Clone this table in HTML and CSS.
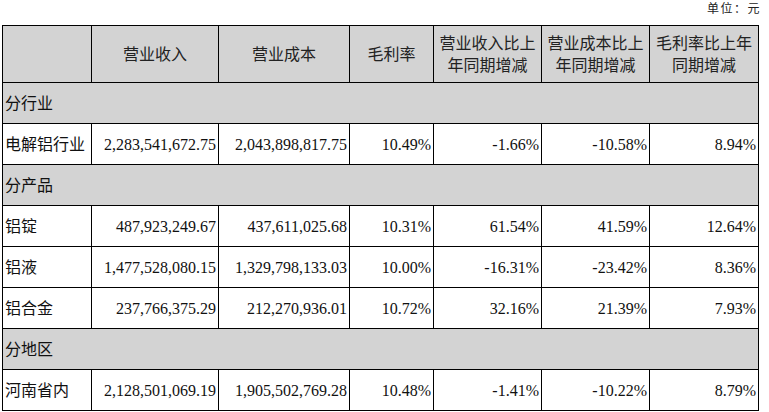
FILE: index.html
```html
<!DOCTYPE html>
<html lang="zh">
<head>
<meta charset="utf-8">
<title>营业收入</title>
<link rel="stylesheet" href="styles.css">
</head>
<body>
<div class="page">
  <div class="unit">单位：元</div>
  <table class="report">
    <colgroup>
      <col class="c1"><col class="c2"><col class="c3"><col class="c4"><col class="c5"><col class="c6"><col class="c7">
    </colgroup>
    <tr class="head">
      <th></th>
      <th>营业收入</th>
      <th>营业成本</th>
      <th>毛利率</th>
      <th>营业收入比上<br>年同期增减</th>
      <th>营业成本比上<br>年同期增减</th>
      <th>毛利率比上年<br>同期增减</th>
    </tr>
    <tr class="section"><td colspan="7">分行业</td></tr>
    <tr class="row">
      <td class="name">电解铝行业</td>
      <td>2,283,541,672.75</td>
      <td>2,043,898,817.75</td>
      <td>10.49%</td>
      <td>-1.66%</td>
      <td>-10.58%</td>
      <td>8.94%</td>
    </tr>
    <tr class="section"><td colspan="7">分产品</td></tr>
    <tr class="row">
      <td class="name">铝锭</td>
      <td>487,923,249.67</td>
      <td>437,611,025.68</td>
      <td>10.31%</td>
      <td>61.54%</td>
      <td>41.59%</td>
      <td>12.64%</td>
    </tr>
    <tr class="row">
      <td class="name">铝液</td>
      <td>1,477,528,080.15</td>
      <td>1,329,798,133.03</td>
      <td>10.00%</td>
      <td>-16.31%</td>
      <td>-23.42%</td>
      <td>8.36%</td>
    </tr>
    <tr class="row">
      <td class="name">铝合金</td>
      <td>237,766,375.29</td>
      <td>212,270,936.01</td>
      <td>10.72%</td>
      <td>32.16%</td>
      <td>21.39%</td>
      <td>7.93%</td>
    </tr>
    <tr class="section"><td colspan="7">分地区</td></tr>
    <tr class="row">
      <td class="name">河南省内</td>
      <td>2,128,501,069.19</td>
      <td>1,905,502,769.28</td>
      <td>10.48%</td>
      <td>-1.41%</td>
      <td>-10.22%</td>
      <td>8.79%</td>
    </tr>
  </table>
</div>
</body>
</html>
```

FILE: styles.css
```css
html, body {
  margin: 0;
  padding: 0;
  background: #ffffff;
}

body {
  font-family: "Liberation Serif", "Noto Sans CJK SC", serif;
  color: #111111;
}

.page {
  padding-left: 2px;
  width: 769px;
  box-sizing: border-box;
}

.unit {
  height: 25px;
  box-sizing: border-box;
  padding-top: 1px;
  padding-right: 8px;
  text-align: right;
  font-size: 12px;
  line-height: 16px;
  letter-spacing: 1.5px;
  color: #222222;
}

.report {
  border-collapse: collapse;
  table-layout: fixed;
  width: 756px;
  font-size: 16px;
}

.c1 { width: 89px; }
.c2 { width: 127px; }
.c3 { width: 131px; }
.c4 { width: 84px; }
.c5 { width: 108px; }
.c6 { width: 108px; }
.c7 { width: 109px; }

.report th,
.report td {
  border: 1px solid #000000;
  padding: 0 2px;
  vertical-align: middle;
  white-space: nowrap;
  line-height: 20px;
}

.head th {
  height: 55px;
  background: #d3d3d3;
  font-weight: normal;
  text-align: center;
  line-height: 22px;
  padding-top: 1px;
  color: #222222;
}

.section td {
  height: 38px;
  background: #d3d3d3;
  text-align: left;
  padding-top: 2px;
}

.row td {
  height: 38px;
  text-align: right;
  padding-top: 2px;
}

.row td.name {
  text-align: left;
}
```
